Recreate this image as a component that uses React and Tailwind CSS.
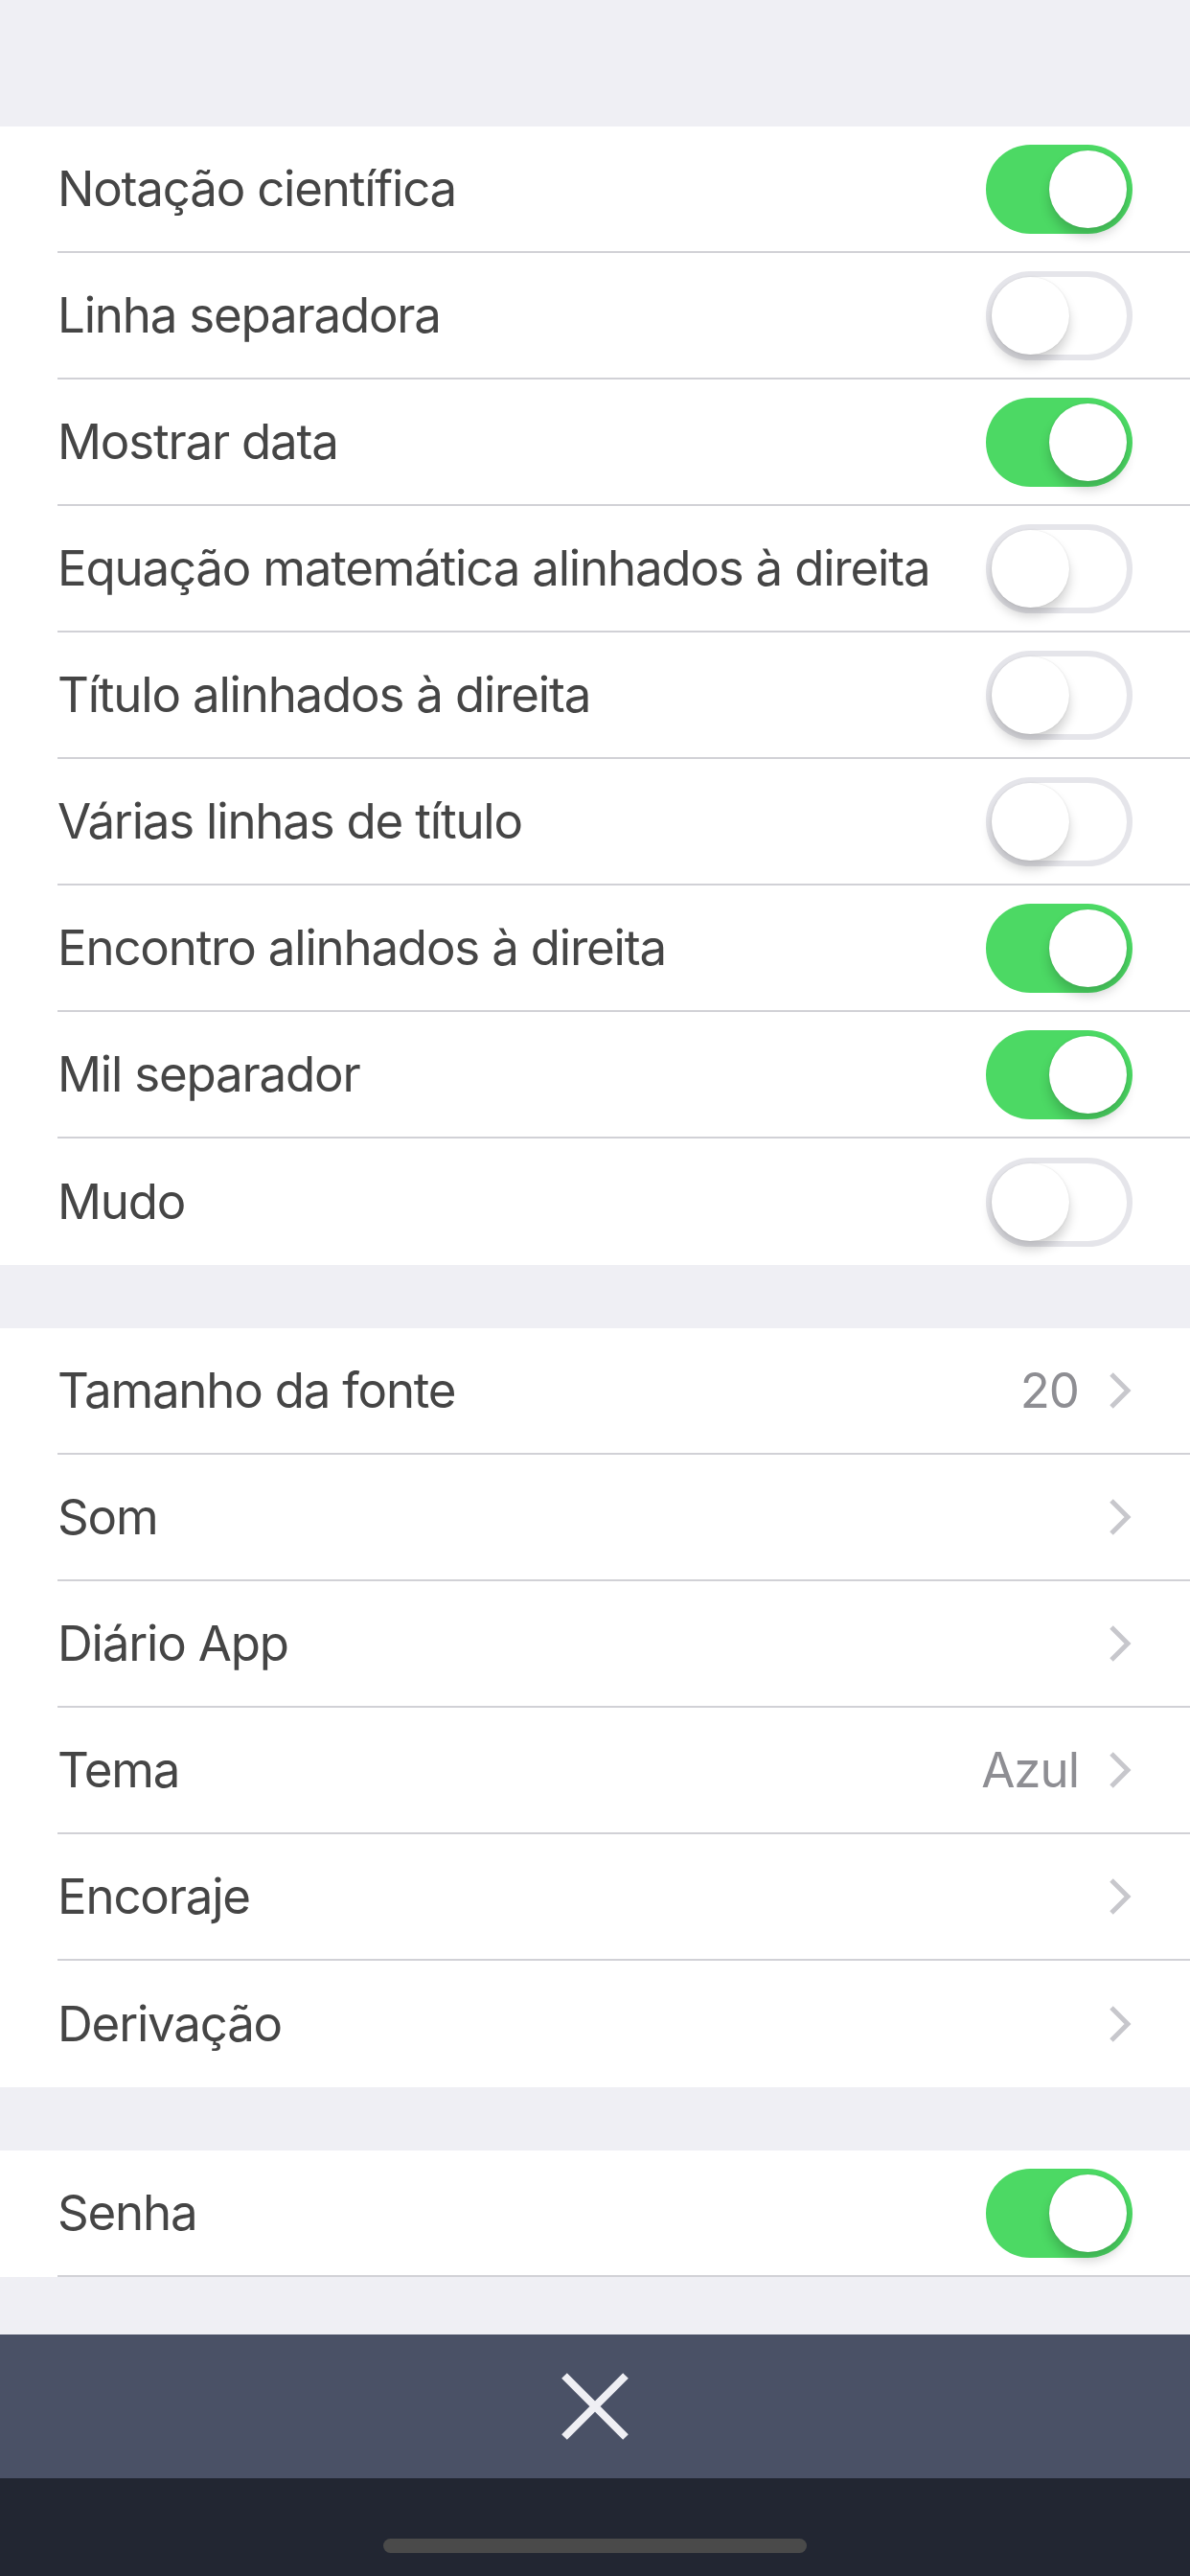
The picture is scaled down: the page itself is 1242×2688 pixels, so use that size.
import React from "react";

const toggles = [
  { label: "Notação científica", on: true },
  { label: "Linha separadora", on: false },
  { label: "Mostrar data", on: true },
  { label: "Equação matemática alinhados à direita", on: false },
  { label: "Título alinhados à direita", on: false },
  { label: "Várias linhas de título", on: false },
  { label: "Encontro alinhados à direita", on: true },
  { label: "Mil separador", on: true },
  { label: "Mudo", on: false },
];

const links = [
  { label: "Tamanho da fonte", value: "20" },
  { label: "Som" },
  { label: "Diário App" },
  { label: "Tema", value: "Azul" },
  { label: "Encoraje" },
  { label: "Derivação" },
];

const Toggle = ({ on }) => (
  <div
    className={
      "relative w-[153px] h-[93px] rounded-full " +
      (on ? "bg-[#4cd964]" : "bg-white border-[6px] border-[#e5e5ea]")
    }
  >
    <div
      className={
        "absolute w-[81px] h-[81px] rounded-full bg-white shadow-[0_9px_12px_rgba(0,0,0,0.18),0_0_2px_rgba(0,0,0,0.12)] " +
        (on ? "top-[6px] right-[6px]" : "top-0 left-0")
      }
    />
  </div>
);

const Chevron = () => (
  <svg width="26" height="40" viewBox="0 0 26 40" className="ml-[30px]">
    <path d="M4 3 L21 20 L4 37" fill="none" stroke="#c7c7cc" strokeWidth="5" />
  </svg>
);

const Row = ({ label, last, children }) => (
  <div className="pl-[60px] bg-white">
    <div
      className={
        "h-[132px] flex items-center justify-between pr-[60px] " +
        (last ? "" : "border-b-2 border-[#d1d1d6]")
      }
    >
      <span className="text-[51px] text-[#454545] tracking-[-1.2px]">{label}</span>
      {children}
    </div>
  </div>
);

export default function App() {
  return (
    <div className="w-[1242px] h-[2688px] bg-[#efeff4] flex flex-col font-['Inter','Liberation_Sans',sans-serif]">
      <div className="h-[132px]" />
      <div>
        {toggles.map((t, i) => (
          <Row key={t.label} label={t.label} last={i === toggles.length - 1}>
            <Toggle on={t.on} />
          </Row>
        ))}
      </div>
      <div className="h-[66px]" />
      <div>
        {links.map((l, i) => (
          <Row key={l.label} label={l.label} last={i === links.length - 1}>
            <div className="flex items-center">
              {l.value && (
                <span className="text-[51px] text-[#8e8e93] tracking-[-1px]">{l.value}</span>
              )}
              <Chevron />
            </div>
          </Row>
        ))}
      </div>
      <div className="h-[66px]" />
      <Row label="Senha">
        <Toggle on />
      </Row>
      <div className="h-[60px]" />
      <div className="h-[150px] bg-[#4a5166] flex items-center justify-center">
        <svg width="72" height="72" viewBox="0 0 72 72">
          <path d="M4 4 L68 68 M68 4 L4 68" stroke="#efeff4" strokeWidth="8" />
        </svg>
      </div>
      <div className="flex-1 bg-[#222632] flex items-end justify-center pb-[24px]">
        <div className="w-[442px] h-[15px] rounded-full bg-[#4a4a4a]" />
      </div>
    </div>
  );
}
